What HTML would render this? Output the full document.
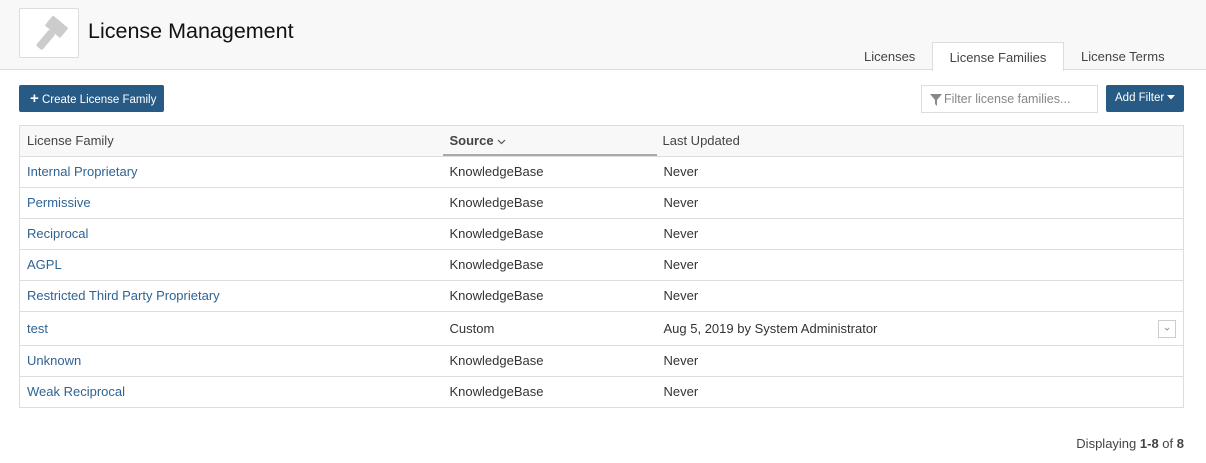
<!DOCTYPE html>
<html><head><style>
*{box-sizing:border-box;margin:0;padding:0}
body{width:1206px;height:463px;background:#fff;font-family:"Liberation Sans",sans-serif;font-size:13px;color:#333;position:relative;overflow:hidden}
.hdr{position:absolute;left:0;top:0;width:1206px;height:70px;background:#f8f8f8;border-bottom:1px solid #ddd}
.logo{position:absolute;left:19px;top:8px;width:60px;height:50px;background:#fff;border:1px solid #ddd;border-radius:2px}
.title{position:absolute;left:88px;top:19px;font-size:21.5px;color:#111}
.tab{position:absolute;top:42px;height:28px;line-height:29px;font-size:13px;color:#444}
.tab.act{background:#fff;border:1px solid #ddd;border-bottom:none;left:932px;width:132px;text-align:center;height:29px}
.btn{position:absolute;top:85px;height:27px;background:#285a86;color:#fff;font-size:11.5px;line-height:27px;border-radius:2px;white-space:nowrap}
.inp{position:absolute;left:921px;top:85px;width:177px;height:28px;border:1px solid #ddd;background:#fff;color:#888;font-size:12.5px;line-height:26px;padding-left:22px}
table{position:absolute;left:19px;top:125px;width:1165px;border-collapse:collapse;border:1px solid #ddd}
td,th{height:31px;border-top:1px solid #ddd;text-align:left;font-weight:normal;padding-left:7px;font-size:13px;vertical-align:middle;line-height:16px}
th{background:#f8f8f8;height:31px;color:#444}
td a{color:#2f6394}
.c2{padding-left:0;width:214px}
</style></head><body>
<div class="hdr">
<div class="logo"><svg width="60" height="50" viewBox="0 0 60 50"><g fill="#ccc" transform="rotate(40 33 22)"><rect x="23" y="10" width="20" height="13" rx="1"/><rect x="29" y="23" width="8" height="21" rx="2"/></g></svg></div>
<div class="title">License Management</div>
<div class="tab" style="left:864px">Licenses</div>
<div class="tab act">License Families</div>
<div class="tab" style="left:1081px">License Terms</div>
</div>
<div class="btn" style="left:19px;width:145px;padding-left:11px"><b style="font-size:15px">+</b> Create License Family</div>
<div class="inp"><svg style="position:absolute;left:8px;top:8px" width="12" height="12" viewBox="0 0 12 12"><path d="M0 0H12L7 6V12L5 10V6Z" fill="#888"/></svg>Filter license families...</div>
<div class="btn" style="left:1106px;width:78px;padding-left:9px">Add Filter <svg width="8" height="5" viewBox="0 0 8 5" style="vertical-align:middle"><path d="M0 0H8L4 4.5Z" fill="#fff"/></svg></div>
<table>
<tr><th style="width:423px">License Family</th><th class="c2" style="padding-left:7px;box-shadow:inset 0 -2px 0 #aaa"><b style="font-weight:bold;color:#444">Source</b> <svg width="9" height="6" viewBox="0 0 9 6" style="vertical-align:middle"><path d="M1 1L4.5 4.5L8 1" stroke="#555" fill="none" stroke-width="1.2"/></svg></th><th style="padding-left:6px">Last Updated</th></tr>
<tr><td><a>Internal Proprietary</a></td><td>KnowledgeBase</td><td>Never</td></tr>
<tr><td><a>Permissive</a></td><td>KnowledgeBase</td><td>Never</td></tr>
<tr><td><a>Reciprocal</a></td><td>KnowledgeBase</td><td>Never</td></tr>
<tr><td><a>AGPL</a></td><td>KnowledgeBase</td><td>Never</td></tr>
<tr><td><a>Restricted Third Party Proprietary</a></td><td>KnowledgeBase</td><td>Never</td></tr>
<tr><td style="height:34px"><a>test</a></td><td>Custom</td><td style="position:relative">Aug 5, 2019 by System Administrator<span style="position:absolute;right:7px;top:8px;width:18px;height:18px;border:1px solid #ccc"><svg width="16" height="16" viewBox="0 0 16 16" style="display:block"><path d="M6 7L8 9L10 7" stroke="#999" fill="none"/></svg></span></td></tr>
<tr><td><a>Unknown</a></td><td>KnowledgeBase</td><td>Never</td></tr>
<tr><td><a>Weak Reciprocal</a></td><td>KnowledgeBase</td><td>Never</td></tr>
</table>
<div style="position:absolute;right:22px;top:436px;font-size:13px;color:#444">Displaying <b>1-8</b> of <b>8</b></div>
</body></html>
